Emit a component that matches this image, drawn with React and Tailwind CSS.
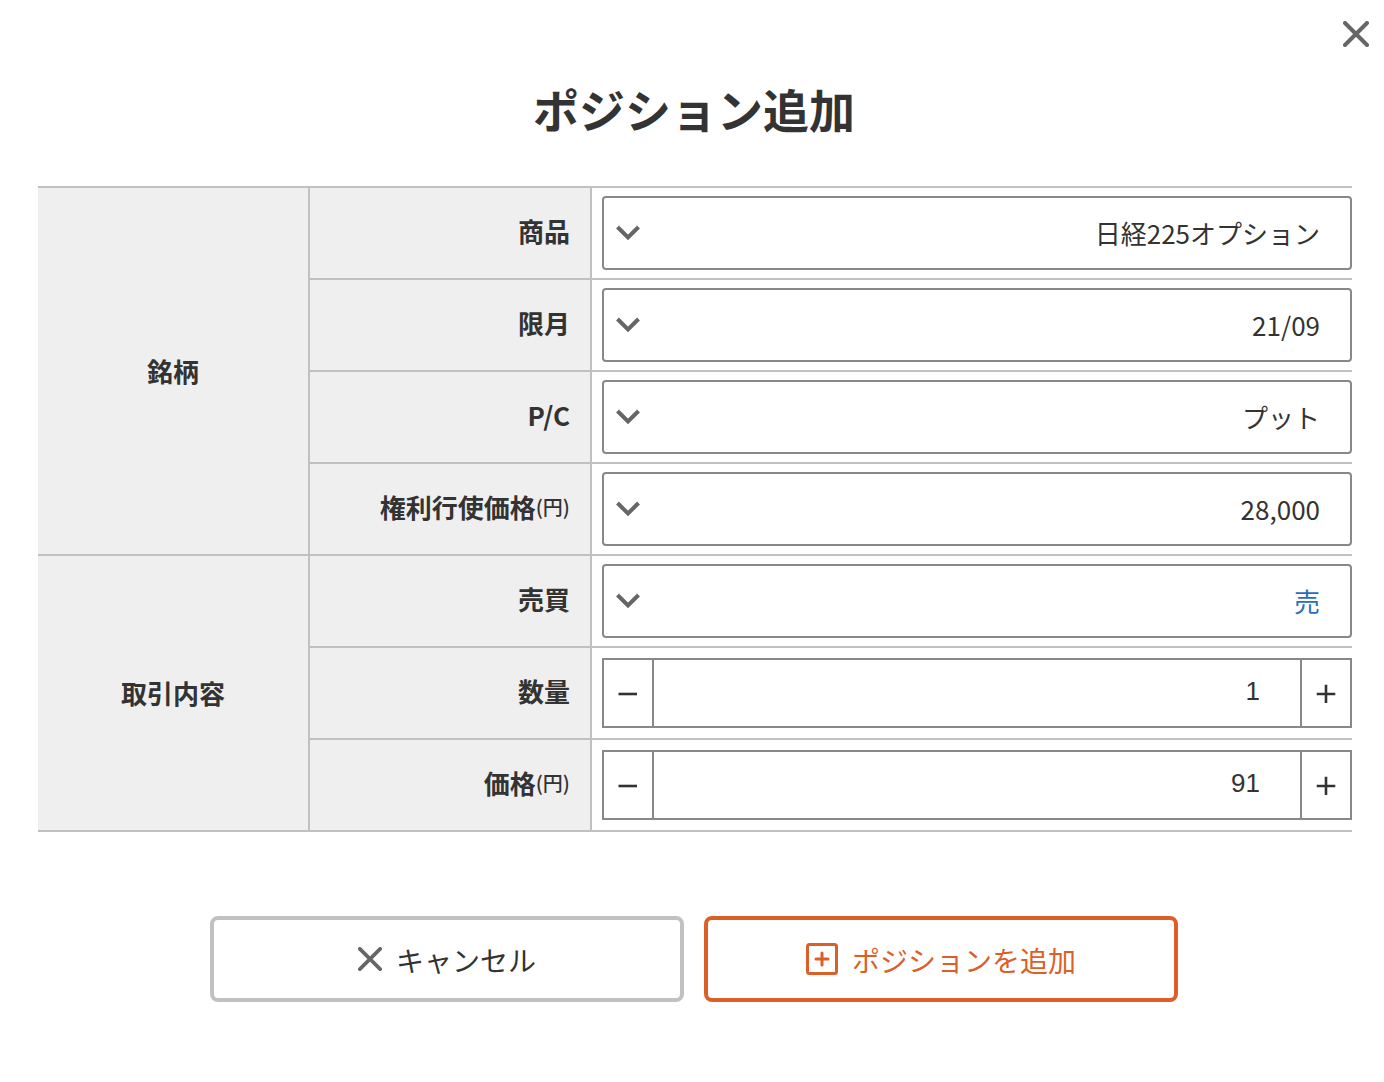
import { useState } from "react";

const GROUPS = [
  {
    title: "銘柄",
    rows: [
      { id: "product", label: "商品", type: "select", options: ["日経225オプション", "日経225先物"] },
      { id: "month", label: "限月", type: "select", options: ["21/09", "21/10", "21/11"] },
      { id: "pc", label: "P/C", type: "select", options: ["プット", "コール"] },
      { id: "strike", label: "権利行使価格", unit: "(円)", type: "select", options: ["28,000", "28,125", "28,250"] },
    ],
  },
  {
    title: "取引内容",
    rows: [
      { id: "side", label: "売買", type: "select", options: ["売", "買"], color: "text-[#2b6cc0]" },
      { id: "quantity", label: "数量", type: "stepper", initial: 1 },
      { id: "price", label: "価格", unit: "(円)", type: "stepper", initial: 91 },
    ],
  },
];

const CrossIcon = ({ className }) => (
  <svg viewBox="0 0 26 26" className={className} fill="none" stroke="#666" strokeWidth="4" strokeLinecap="round" aria-hidden="true">
    <path d="M2 2l22 22M24 2L2 24" />
  </svg>
);

const ChevronIcon = () => (
  <svg
    viewBox="0 0 24 16"
    className="pointer-events-none absolute left-3.5 top-1/2 h-4 w-6 -translate-y-1/2"
    fill="none"
    stroke="#666"
    strokeWidth="4"
    aria-hidden="true"
  >
    <path d="M1.5 2L12 12.5L22.5 2" />
  </svg>
);

const PlusBoxIcon = () => (
  <svg viewBox="0 0 32 32" className="h-8 w-8" fill="none" stroke="#dc5f27" strokeWidth="3" aria-hidden="true">
    <rect x="1.5" y="1.5" width="29" height="29" rx="2" />
    <path d="M16 10v12M10 16h12" strokeLinecap="round" />
  </svg>
);

const SelectField = ({ id, options, color }) => (
  <div className="relative">
    <select
      id={id}
      className={`block h-[74px] w-full appearance-none rounded-sm border-2 border-[#888] bg-white pl-14 pr-[30px] text-right ${color || "text-[#333]"}`}
    >
      {options.map((option) => (
        <option key={option}>{option}</option>
      ))}
    </select>
    <ChevronIcon />
  </div>
);

const Stepper = ({ id, label, initial }) => {
  const [value, setValue] = useState(initial);

  return (
    <div className="flex h-[70px] border-2 border-[#888]">
      <button
        type="button"
        aria-label={`${label}を減らす`}
        onClick={() => setValue((prev) => Math.max(0, Number(prev) - 1))}
        className="flex w-12 shrink-0 items-center justify-center"
      >
        <svg viewBox="0 0 20 20" className="h-5 w-5" stroke="#333" strokeWidth="2.6" aria-hidden="true">
          <path d="M.5 11h18.5" />
        </svg>
      </button>
      <input
        id={id}
        type="text"
        inputMode="numeric"
        value={value}
        onChange={(e) => setValue(e.target.value)}
        className="min-w-0 flex-1 border-x-2 border-[#888] pb-1 pr-10 text-right font-['Liberation_Sans',sans-serif] text-[#333]"
      />
      <button
        type="button"
        aria-label={`${label}を増やす`}
        onClick={() => setValue((prev) => Number(prev) + 1)}
        className="flex w-12 shrink-0 items-center justify-center"
      >
        <svg viewBox="0 0 20 20" className="h-5 w-5" stroke="#333" strokeWidth="2.6" aria-hidden="true">
          <path d="M.7 11h18.6M10 1.7v18.3" />
        </svg>
      </button>
    </div>
  );
};

const App = () => {
  return (
    <div className="relative min-h-screen bg-white pb-20 pl-[38px] pr-8 font-['Noto_Sans_CJK_JP',sans-serif] text-[26px] leading-9 text-[#333]">
      <button type="button" aria-label="閉じる" className="absolute right-[15px] top-[21px]">
        <CrossIcon className="h-[26px] w-[26px]" />
      </button>

      <h1 className="pr-0.5 pt-[76px] text-center text-[46px] font-bold leading-[64px]">ポジション追加</h1>

      <table className="mt-[46px] w-full table-fixed border-separate border-spacing-0 border-b-2 border-[#c1c1c1]">
        <colgroup>
          <col className="w-[272px]" />
          <col className="w-[282px]" />
          <col />
        </colgroup>
        {GROUPS.map((group) => (
          <tbody key={group.title}>
            {group.rows.map((row, i) => (
              <tr key={row.id} className="h-[92px]">
                {i === 0 && (
                  <th
                    scope="rowgroup"
                    rowSpan={group.rows.length}
                    className="border-r-2 border-t-2 border-[#c1c1c1] bg-[#efefef] p-0 font-bold"
                  >
                    {group.title}
                  </th>
                )}
                <th scope="row" className="border-r-2 border-t-2 border-[#c1c1c1] bg-[#efefef] pb-1 pl-0 pr-5 pt-0 font-bold">
                  <label htmlFor={row.id} className="flex items-center justify-end">
                    {row.label}
                    {row.unit && <span className="text-xl font-medium">{row.unit}</span>}
                  </label>
                </th>
                <td className="border-t-2 border-[#c1c1c1] py-0 pl-2.5 pr-0">
                  {row.type === "select" ? <SelectField {...row} /> : <Stepper {...row} />}
                </td>
              </tr>
            ))}
          </tbody>
        ))}
      </table>

      <div className="mt-[84px] flex justify-center gap-5 pr-0.5 text-[28px]">
        <button
          type="button"
          className="flex h-[86px] w-[474px] items-center justify-center gap-3.5 rounded-lg border-4 border-[#c1c1c1]"
        >
          <CrossIcon className="h-6 w-6" />
          <span className="pt-0.5">キャンセル</span>
        </button>
        <button
          type="button"
          className="flex h-[86px] w-[474px] items-center justify-center gap-3.5 rounded-lg border-4 border-[#dc5f27] text-[#dc5f27]"
        >
          <PlusBoxIcon />
          <span className="pt-0.5">ポジションを追加</span>
        </button>
      </div>
    </div>
  );
};

export default App;
